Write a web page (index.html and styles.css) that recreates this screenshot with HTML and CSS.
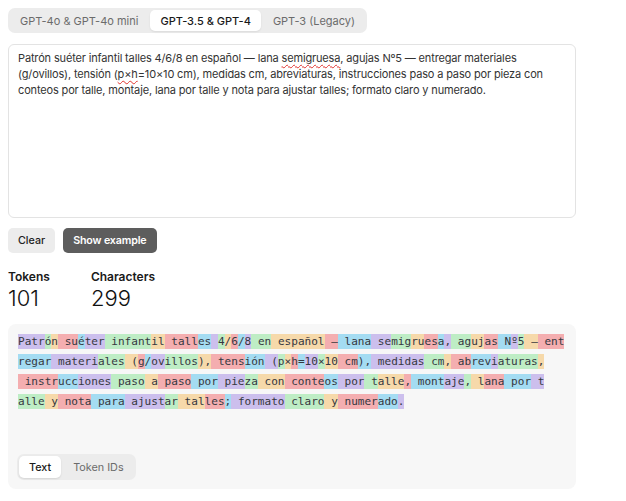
FILE: index.html
```html
<!DOCTYPE html>
<html lang="es">
<head>
<meta charset="utf-8">
<title>Tokenizer</title>
<link rel="stylesheet" href="styles.css">
</head>
<body>
<div class="page">
  <div class="tabs">
    <button class="tab">GPT-4o &amp; GPT-4o mini</button>
    <button class="tab active">GPT-3.5 &amp; GPT-4</button>
    <button class="tab">GPT-3 (Legacy)</button>
  </div>

  <div class="input">Patrón suéter infantil talles 4/6/8 en español — lana <span class="spell">semigruesa</span>, agujas Nº5 — entregar materiales (g/ovillos), tensión (<span class="spell">p×h</span>=10×10 cm), medidas cm, abreviaturas, instrucciones paso a paso por pieza con conteos por talle, montaje, lana por talle y nota para ajustar talles; formato claro y numerado.</div>

  <div class="actions">
    <button class="btn btn-light">Clear</button>
    <button class="btn btn-dark">Show example</button>
  </div>

  <div class="stats">
    <div class="stat">
      <div class="stat-label">Tokens</div>
      <div class="stat-value">101</div>
    </div>
    <div class="stat">
      <div class="stat-label">Characters</div>
      <div class="stat-value">299</div>
    </div>
  </div>

  <div class="output">
    <div class="tokens"><span class="t0">Patr</span><span class="t1">ó</span><span class="t2">n</span><span class="t3"> su</span><span class="t4">é</span><span class="t0">ter</span><span class="t1"> infant</span><span class="t2">il</span><span class="t3"> tall</span><span class="t4">es</span><span class="t0"> </span><span class="t1">4</span><span class="t2">/</span><span class="t3">6</span><span class="t4">/</span><span class="t0">8</span><span class="t1"> en</span><span class="t2"> español</span><span class="t3"> —</span><span class="t4"> lana</span><span class="t0"> se</span><span class="t1">mig</span><span class="t2">ru</span><span class="t3">es</span><span class="t4">a</span><span class="t0">,</span><span class="t1"> ag</span><span class="t2">uj</span><span class="t3">as</span><span class="t4"> N</span><span class="t0">º</span><span class="t1">5</span><span class="t2"> —</span><span class="t3"> ent</span><span class="t4">regar</span><span class="t0"> materi</span><span class="t1">ales</span><span class="t2"> (</span><span class="t3">g</span><span class="t4">/</span><span class="t0">ov</span><span class="t1">illos</span><span class="t2">),</span><span class="t3"> tens</span><span class="t4">ión</span><span class="t0"> (</span><span class="t1">p</span><span class="t2">×</span><span class="t3">h</span><span class="t4">=</span><span class="t0">10</span><span class="t1">×</span><span class="t2">10</span><span class="t3"> cm</span><span class="t4">),</span><span class="t0"> medidas</span><span class="t1"> cm</span><span class="t2">,</span><span class="t3"> ab</span><span class="t4">rev</span><span class="t0">i</span><span class="t1">aturas</span><span class="t2">,</span><span class="t3"> instr</span><span class="t4">ucc</span><span class="t0">iones</span><span class="t1"> paso</span><span class="t2"> a</span><span class="t3"> paso</span><span class="t4"> por</span><span class="t0"> pie</span><span class="t1">za</span><span class="t2"> con</span><span class="t3"> conte</span><span class="t4">os</span><span class="t0"> por</span><span class="t1"> t</span><span class="t2">alle</span><span class="t3">,</span><span class="t4"> mont</span><span class="t0">aje</span><span class="t1">,</span><span class="t2"> l</span><span class="t3">ana</span><span class="t4"> por</span><span class="t0"> t</span><span class="t1">alle</span><span class="t2"> y</span><span class="t3"> nota</span><span class="t4"> para</span><span class="t0"> ajust</span><span class="t1">ar</span><span class="t2"> tal</span><span class="t3">les</span><span class="t4">;</span><span class="t0"> formato</span><span class="t1"> claro</span><span class="t2"> y</span><span class="t3"> numer</span><span class="t4">ado</span><span class="t0">.</span></div>
    <div class="toggle">
      <button class="toggle-item active">Text</button>
      <button class="toggle-item">Token IDs</button>
    </div>
  </div>
</div>
</body>
</html>
```

FILE: styles.css
```css
* { box-sizing: border-box; }

body {
  margin: 0;
  padding: 8px;
  background: #ffffff;
  font-family: Inter, "Noto Sans", sans-serif;
  color: #202123;
}

button {
  font-family: inherit;
  border: 0;
  cursor: pointer;
}

.page {
  width: 568px;
}

/* model tabs */
.tabs {
  display: inline-flex;
  gap: 2px;
  padding: 2px;
  background: #ececec;
  border-radius: 7px;
}

.tab {
  height: 21px;
  padding: 0 10px;
  background: transparent;
  border-radius: 5px;
  font-size: 11px;
  font-weight: 400;
  color: #6b6b6b;
}

.tab.active {
  background: #ffffff;
  color: #1a1a1a;
  font-weight: 500;
  box-shadow: 0 1px 2px rgba(0, 0, 0, 0.08);
}

/* input */
.input {
  margin-top: 11px;
  height: 174px;
  padding: 5px 20px 5px 9px;
  border: 1px solid #e3e3e3;
  border-radius: 6px;
  font-size: 11px;
  letter-spacing: -0.15px;
  line-height: 16px;
  color: #333333;
}

.spell {
  text-decoration: underline wavy #e0332f;
  text-decoration-thickness: 1px;
  text-underline-offset: 2px;
}

/* buttons */
.actions {
  display: flex;
  gap: 8px;
  margin-top: 10px;
}

.btn {
  height: 25px;
  padding: 0 10px;
  border-radius: 5px;
  font-size: 10.7px;
  font-weight: 500;
}

.btn-light {
  background: #ececec;
  color: #222222;
}

.btn-dark {
  background: #5d5d5d;
  color: #ffffff;
  font-weight: 600;
  letter-spacing: -0.15px;
}

/* stats */
.stats {
  display: flex;
  gap: 41px;
  margin-top: 16px;
}

.stat-label {
  font-size: 12px;
  line-height: 16px;
  font-weight: 600;
  color: #1a1a1a;
}

.stat-value {
  font-size: 22px;
  line-height: 26px;
  font-weight: 300;
  color: #111111;
}

/* output */
.output {
  margin-top: 13px;
  height: 165px;
  padding: 10px 8px 9px 10px;
  background: #f7f7f7;
  border-radius: 8px;
  display: flex;
  flex-direction: column;
  justify-content: space-between;
}

.tokens {
  display: flex;
  flex-wrap: wrap;
  row-gap: 5px;
  font-family: "DejaVu Sans Mono", monospace;
  font-size: 11.07px;
  color: #353740;
}

.tokens span {
  white-space: pre;
  line-height: 15px;
}

.t0 { background: rgba(107, 64, 216, 0.3); }
.t1 { background: rgba(104, 222, 122, 0.4); }
.t2 { background: rgba(244, 172, 54, 0.4); }
.t3 { background: rgba(239, 65, 70, 0.4); }
.t4 { background: rgba(39, 181, 234, 0.4); }

.toggle {
  align-self: flex-start;
  display: inline-flex;
  gap: 2px;
  padding: 2px;
  margin-left: -1px;
  background: #ececec;
  border-radius: 7px;
}

.toggle-item {
  height: 22px;
  padding: 0 10px;
  border-radius: 5px;
  background: transparent;
  font-size: 10.8px;
  color: #6b6b6b;
}

.toggle-item.active {
  background: #ffffff;
  color: #1a1a1a;
  font-weight: 500;
  box-shadow: 0 1px 2px rgba(0, 0, 0, 0.1);
}
```
